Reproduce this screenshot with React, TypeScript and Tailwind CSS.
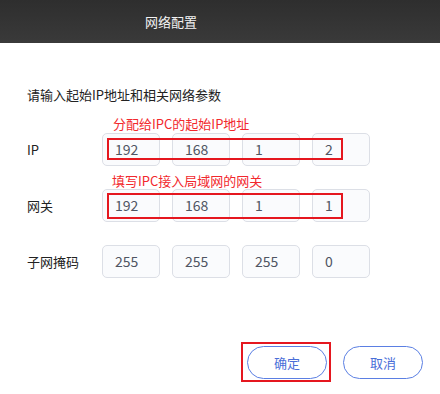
import React from "react";

const font = { fontFamily: '"Noto Sans CJK SC", "Noto Sans", sans-serif' };

function Box({ v }: { v: string }) {
  return (
    <div className="w-[58px] h-[33px] border border-[#dcdfe6] rounded-[5px] bg-[#fafbfd] flex items-center pl-[12px] text-[14px] text-[#4f5563]">
      {v}
    </div>
  );
}

function Boxes({ vals, mark }: { vals: string[]; mark?: string }) {
  return (
    <div className="relative flex gap-[12px]">
      {vals.map((v, i) => (
        <Box key={i} v={v} />
      ))}
      {mark && <div className={"absolute left-[5px] w-[236px] border-2 border-[#e5171f] " + mark} />}
    </div>
  );
}

export default function App() {
  return (
    <div className="w-[440px] h-[394px] bg-white overflow-hidden" style={font}>
      <div className="h-[43px] bg-gradient-to-b from-[#2e2e2e] to-[#3a3a3a] flex items-center pl-[145px] text-[13px] text-[#f2f2f2]">
        网络配置
      </div>
      <div className="pl-[27px]">
        <div className="mt-[42px] text-[13px] leading-[20px] text-[#222]">请输入起始IP地址和相关网络参数</div>

        <div className="mt-[11px] ml-[86px] text-[13px] leading-[16px] text-[#f2282d]">分配给IPC的起始IP地址</div>
        <div className="mt-[1px] flex items-center">
          <div className="w-[75px] text-[13px] text-[#222]">IP</div>
          <Boxes vals={["192", "168", "1", "2"]} mark="top-[5px] h-[22px]" />
        </div>

        <div className="mt-[7px] ml-[85px] text-[13px] leading-[16px] text-[#f2282d]">填写IPC接入局域网的网关</div>
        <div className="flex items-center">
          <div className="w-[75px] text-[13px] text-[#222]">网关</div>
          <Boxes vals={["192", "168", "1", "1"]} mark="top-[4px] h-[26px]" />
        </div>

        <div className="mt-[23px] flex items-center">
          <div className="w-[75px] text-[13px] text-[#222]">子网掩码</div>
          <Boxes vals={["255", "255", "255", "0"]} />
        </div>
      </div>

      <div className="mt-[68px] flex justify-end gap-[16px] pr-[17px]">
        <div className="relative">
          <button className="w-[80px] h-[33px] rounded-full border border-[#5b7fe3] text-[13px] text-[#4a6ed8] bg-white">
            确定
          </button>
          <div className="absolute top-[-4px] left-[-6px] right-[-4px] bottom-[-3px] border-2 border-[#e5171f]" />
        </div>
        <button className="w-[80px] h-[33px] rounded-full border border-[#5b7fe3] text-[13px] text-[#4a6ed8] bg-white">
          取消
        </button>
      </div>
    </div>
  );
}
